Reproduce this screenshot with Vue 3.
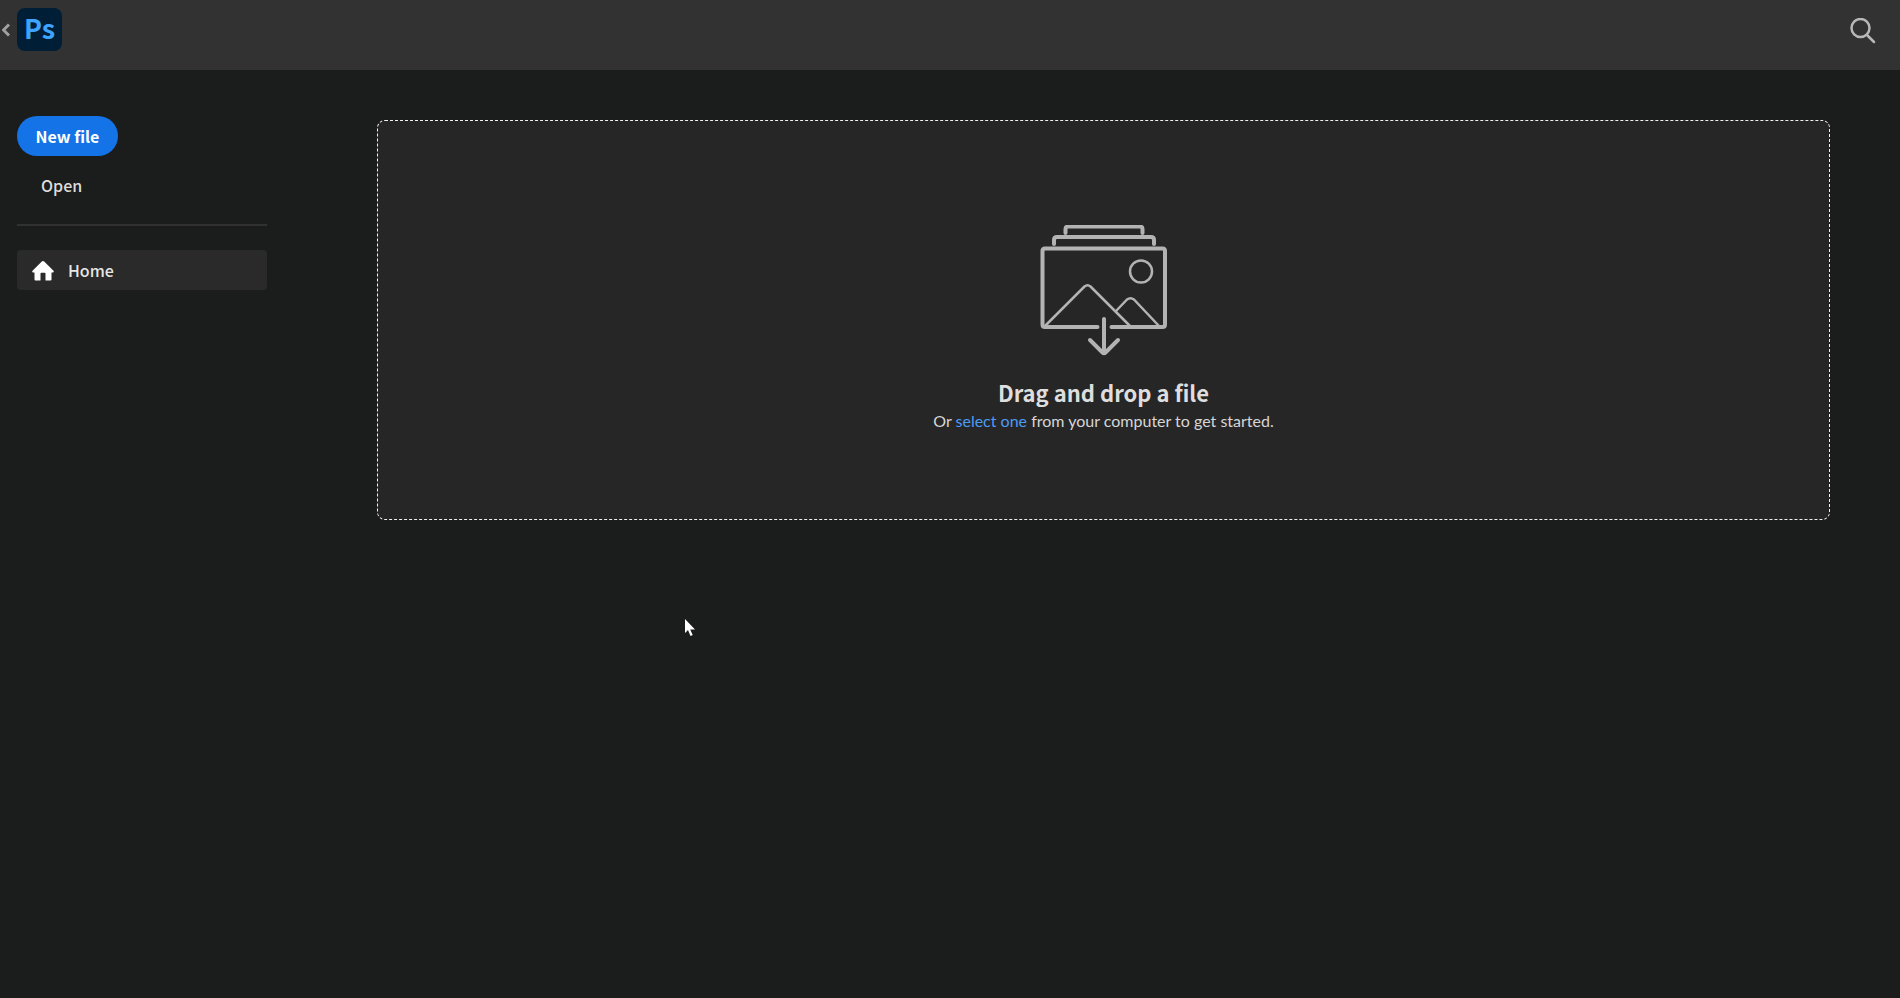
<script setup>
import { ref } from 'vue'

const picker = ref(null)
const openPicker = () => picker.value.click()
</script>

<template>
  <div class="app">
    <header class="topbar">
      <button class="back" type="button" aria-label="Back">
        <svg width="9" height="14" viewBox="0 0 9 14"><path d="M7 1.500 1.500 7 7 12.500" /></svg>
      </button>
      <div class="logo">Ps</div>
      <button class="search" type="button" aria-label="Search">
        <svg width="26" height="26" viewBox="0 0 26 26">
          <circle cx="10.500" cy="10" r="9" />
          <path d="m17 17 7 7" />
        </svg>
      </button>
    </header>

    <div class="body">
      <aside class="sidebar">
        <button class="new-file" type="button">New file</button>
        <button class="open" type="button" @click="openPicker">Open</button>
        <hr class="divider" />
        <nav>
          <a class="nav-item" href="#">
            <svg width="22" height="20" viewBox="0 0 22 20">
              <path d="M9.800.6q1.200-1 2.400 0L21.500 9.800q.8 1.400-.7 1.700H19.500v7q0 1-1 1h-5v-7q0-.8-.8-.8H9.300q-.8 0-.8.800v7h-5q-1 0-1-1v-7H1.200q-1.500-.3-.7-1.700Z" />
            </svg>
            <span>Home</span>
          </a>
        </nav>
      </aside>

      <main class="content">
        <section class="dropzone">
          <svg class="art" width="128" height="132" viewBox="0 0 128 132">
            <g class="frame">
              <path d="M25.500 8V4q0-2.500 2.500-2.500h72q2.500 0 2.500 2.500v4" />
              <path d="M14 19v-4q0-3 3-3h94q3 0 3 3v4" />
              <path d="M57.500 102H5q-2.500 0-2.500-2.500V26q0-2.500 2.500-2.500h117.500q2.500 0 2.500 2.500v73.500q0 2.500-2.500 2.500H71.500" />
              <path d="M64 94v34" />
              <path d="m50 115 12.500 12.500q1.500 1.500 3 0L78 115" />
            </g>
            <g class="scene">
              <circle cx="101" cy="46.500" r="11" />
              <path d="m5 101 39.500-39.500q3-2.500 6 0L90 101" />
              <path d="m76 86 11-11.500q3.500-2.500 7 0L119 101" />
            </g>
          </svg>
          <h1>Drag and drop a file</h1>
          <p>Or <a href="#" @click.prevent="openPicker">select one</a> from your computer to get started.</p>
          <input ref="picker" type="file" hidden aria-label="Select a file" />
        </section>
      </main>
    </div>

    <svg class="cursor" width="12" height="18" viewBox="0 0 12 18">
      <path d="M1 0v14l3-3 2.500 6 2.200-1-2.500-5.500H11Z" />
    </svg>
  </div>
</template>

<style>
body {
  background: #1b1d1c;
}
</style>

<style scoped>
.app {
  position: relative;
  min-height: 100vh;
  background: #1b1d1c;
  color: #dedede;
  font-family: "Noto Sans CJK SC", "Noto Sans", sans-serif;
  font-size: 16px;
}
button {
  padding: 0;
  border: 0;
  background: none;
  color: inherit;
  font: inherit;
  cursor: pointer;
}
svg {
  display: block;
}
.topbar {
  display: flex;
  align-items: flex-start;
  box-sizing: border-box;
  height: 70px;
  padding: 8px 24px 0 2px;
  background: #323232;
}
.back {
  display: flex;
  align-items: center;
  width: 15px;
  height: 44px;
}
.back path {
  fill: none;
  stroke: #a0a0a0;
  stroke-width: 3;
}
.logo {
  width: 45px;
  height: 43px;
  border-radius: 8px;
  background: #001e36;
  color: #3fa4ff;
  font-size: 27px;
  font-weight: 700;
  line-height: 40px;
  text-align: center;
}
.search {
  margin: 10px 0 0 auto;
}
.search svg {
  fill: none;
  stroke: #b8b8b8;
  stroke-width: 2.5;
  stroke-linecap: round;
}
.body {
  display: flex;
}
.sidebar {
  display: flex;
  flex-direction: column;
  align-items: flex-start;
  flex: none;
  width: 250px;
  padding: 46px 0 0 17px;
}
.new-file {
  width: 101px;
  height: 40px;
  border-radius: 20px;
  background: #1473e6;
  color: #fff;
  font-weight: 700;
}
.open {
  height: 38px;
  margin: 10px 0 0 24px;
  font-weight: 500;
}
.divider {
  width: 100%;
  height: 2px;
  margin: 20px 0 24px;
  border: 0;
  background: #303130;
}
nav {
  width: 100%;
}
.nav-item {
  display: flex;
  align-items: center;
  gap: 14px;
  height: 40px;
  padding-left: 15px;
  border-radius: 4px;
  background: #2a2a2a;
  color: #e6e6e6;
  font-weight: 500;
  text-decoration: none;
}
.nav-item svg {
  margin-top: 2px;
  fill: #fff;
}
.content {
  flex: 1;
  padding: 50px 70px 0 110px;
}
.dropzone {
  display: flex;
  flex-direction: column;
  align-items: center;
  box-sizing: border-box;
  height: 400px;
  padding-top: 104px;
  border: 1px dashed #f0f0f0;
  border-radius: 8px;
  background: #262626;
}
.art {
  fill: none;
  stroke: #b3b3b3;
  stroke-linecap: round;
  stroke-linejoin: round;
}
.frame {
  stroke-width: 4;
}
.scene {
  stroke-width: 2.5;
}
h1 {
  margin: 20px 0 0;
  font-size: 22px;
  font-weight: 700;
  line-height: 30px;
}
p {
  margin: 0;
  color: #d6d6d6;
  font-family: Lato, "Noto Sans", sans-serif;
  line-height: 28px;
}
p a {
  color: #4b9cf5;
  text-decoration: none;
}
.cursor {
  position: absolute;
  top: 619px;
  left: 684px;
  fill: #fff;
  pointer-events: none;
}
</style>
